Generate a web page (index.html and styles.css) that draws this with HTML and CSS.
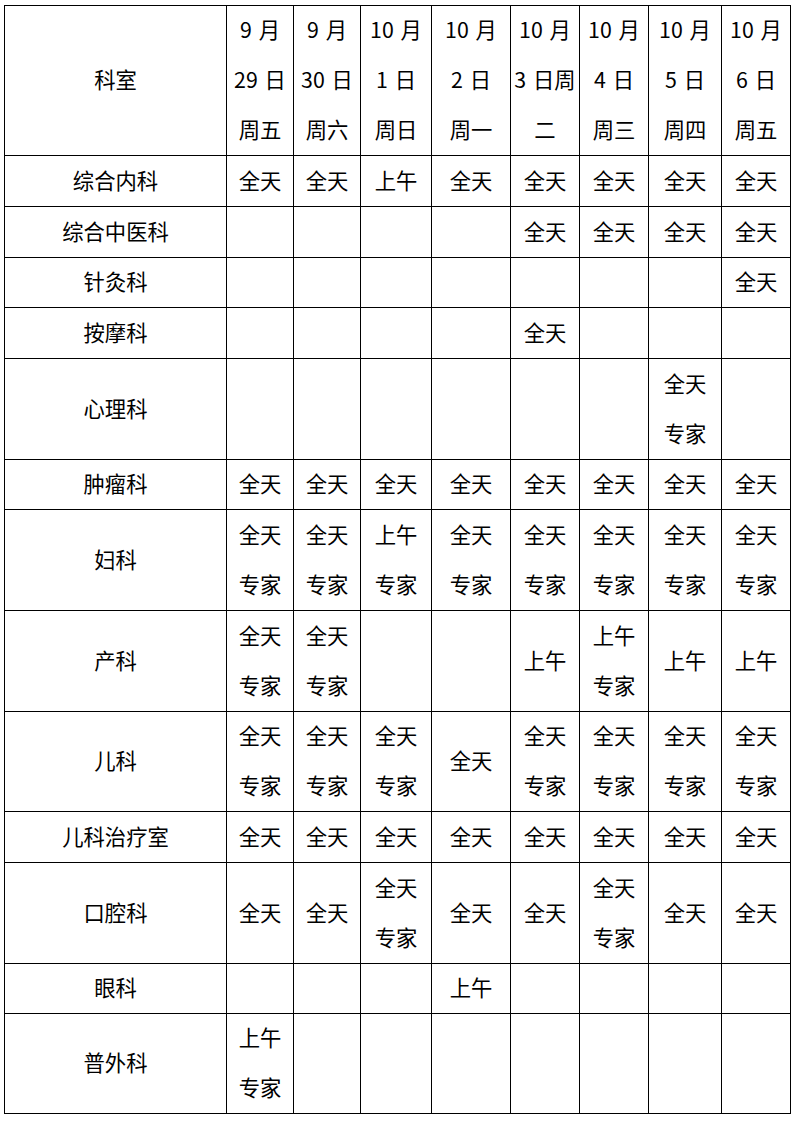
FILE: index.html
```html
<!DOCTYPE html>
<html lang="zh-CN">
<head>
<meta charset="utf-8">
<title>门诊排班表</title>
<link rel="stylesheet" href="styles.css">
</head>
<body>
<div class="sheet">
  <div class="c">科室</div>
  <div class="c hd">9 月<br>29 日<br>周五</div>
  <div class="c hd">9 月<br>30 日<br>周六</div>
  <div class="c hd">10 月<br>1 日<br>周日</div>
  <div class="c hd">10 月<br>2 日<br>周一</div>
  <div class="c hd">10 月<br>3 日周<br>二</div>
  <div class="c hd">10 月<br>4 日<br>周三</div>
  <div class="c hd">10 月<br>5 日<br>周四</div>
  <div class="c hd">10 月<br>6 日<br>周五</div>

  <div class="c">综合内科</div>
  <div class="c">全天</div><div class="c">全天</div><div class="c">上午</div><div class="c">全天</div>
  <div class="c">全天</div><div class="c">全天</div><div class="c">全天</div><div class="c">全天</div>

  <div class="c">综合中医科</div>
  <div class="c"></div><div class="c"></div><div class="c"></div><div class="c"></div>
  <div class="c">全天</div><div class="c">全天</div><div class="c">全天</div><div class="c">全天</div>

  <div class="c">针灸科</div>
  <div class="c"></div><div class="c"></div><div class="c"></div><div class="c"></div>
  <div class="c"></div><div class="c"></div><div class="c"></div><div class="c">全天</div>

  <div class="c">按摩科</div>
  <div class="c"></div><div class="c"></div><div class="c"></div><div class="c"></div>
  <div class="c">全天</div><div class="c"></div><div class="c"></div><div class="c"></div>

  <div class="c">心理科</div>
  <div class="c"></div><div class="c"></div><div class="c"></div><div class="c"></div>
  <div class="c"></div><div class="c"></div><div class="c">全天<br>专家</div><div class="c"></div>

  <div class="c">肿瘤科</div>
  <div class="c">全天</div><div class="c">全天</div><div class="c">全天</div><div class="c">全天</div>
  <div class="c">全天</div><div class="c">全天</div><div class="c">全天</div><div class="c">全天</div>

  <div class="c">妇科</div>
  <div class="c">全天<br>专家</div><div class="c">全天<br>专家</div><div class="c">上午<br>专家</div><div class="c">全天<br>专家</div>
  <div class="c">全天<br>专家</div><div class="c">全天<br>专家</div><div class="c">全天<br>专家</div><div class="c">全天<br>专家</div>

  <div class="c">产科</div>
  <div class="c">全天<br>专家</div><div class="c">全天<br>专家</div><div class="c"></div><div class="c"></div>
  <div class="c">上午</div><div class="c">上午<br>专家</div><div class="c">上午</div><div class="c">上午</div>

  <div class="c">儿科</div>
  <div class="c">全天<br>专家</div><div class="c">全天<br>专家</div><div class="c">全天<br>专家</div><div class="c">全天</div>
  <div class="c">全天<br>专家</div><div class="c">全天<br>专家</div><div class="c">全天<br>专家</div><div class="c">全天<br>专家</div>

  <div class="c">儿科治疗室</div>
  <div class="c">全天</div><div class="c">全天</div><div class="c">全天</div><div class="c">全天</div>
  <div class="c">全天</div><div class="c">全天</div><div class="c">全天</div><div class="c">全天</div>

  <div class="c">口腔科</div>
  <div class="c">全天</div><div class="c">全天</div><div class="c">全天<br>专家</div><div class="c">全天</div>
  <div class="c">全天</div><div class="c">全天<br>专家</div><div class="c">全天</div><div class="c">全天</div>

  <div class="c">眼科</div>
  <div class="c"></div><div class="c"></div><div class="c"></div><div class="c">上午</div>
  <div class="c"></div><div class="c"></div><div class="c"></div><div class="c"></div>

  <div class="c">普外科</div>
  <div class="c">上午<br>专家</div><div class="c"></div><div class="c"></div><div class="c"></div>
  <div class="c"></div><div class="c"></div><div class="c"></div><div class="c"></div>
</div>
</body>
</html>
```

FILE: styles.css
```css
html, body {
  margin: 0;
  padding: 0;
  background: #ffffff;
}

body {
  padding: 5px 0 0 4px;
  font-family: "Noto Sans CJK SC", "Noto Sans", sans-serif;
  font-size: 21.33px;
  color: #000000;
}

.sheet {
  display: grid;
  width: max-content;
  grid-template-columns: 221px 66px 66px 70px 78px 68px 68px 72px 68px;
  grid-template-rows: 149px 50px 50px 49px 50px 100px 49px 100px 100px 99px 50px 100px 49px 99px;
  gap: 1px;
  padding: 1px;
  background: #000000;
}

.c {
  background: #ffffff;
  display: flex;
  align-items: center;
  justify-content: center;
  text-align: center;
  line-height: 50px;
  padding-bottom: 3px;
  white-space: nowrap;
  overflow: hidden;
}

.hd {
  word-spacing: 2px;
  padding-bottom: 4px;
}
```
